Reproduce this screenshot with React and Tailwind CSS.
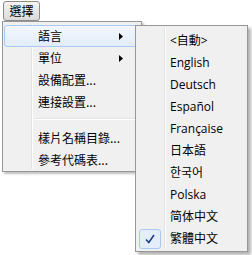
import { Fragment } from 'react';

const cjk = '"Noto Sans CJK TC", "Noto Sans CJK JP", sans-serif';
const latin = '"Segoe UI", "Open Sans", "Noto Sans CJK TC", sans-serif';

const mainItems = [
  { label: '語言', arrow: true, hover: true },
  { label: '單位', arrow: true },
  { label: '設備配置...' },
  { label: '連接設置...' },
  { sep: true },
  { label: '樣片名稱目錄...' },
  { label: '參考代碼表...' },
];

const languages = [
  '<自動>',
  'English',
  'Deutsch',
  'Español',
  'Française',
  '日本語',
  '한국어',
  'Polska',
  '简体中文',
  '繁體中文',
];

const Arrow = () => (
  <svg width="4" height="7" viewBox="0 0 4 7" className="absolute right-[15px] top-[7px]">
    <path d="M0 0 L4 3.5 L0 7 Z" fill="#000" />
  </svg>
);

const MainMenu = () => (
  <div className="absolute left-[2px] top-[21px] w-[140px] border border-[#979797] bg-[#f0f0f0] pt-[3px] pb-0 pl-[1px] pr-[2px] shadow-[2px_2px_2px_rgba(0,0,0,0.25)]">
    {/* gutter */}
    <div className="absolute left-[28px] top-[2px] bottom-[2px] w-[1px] bg-[#e2e3e3] shadow-[1px_0_0_#ffffff]" />
    {mainItems.map((it, i) =>
      it.sep ? (
        <div key={i} className="relative h-[9px] pl-[30px]">
          <div className="mt-[5px] h-[1px] bg-[#e2e3e3] shadow-[0_1px_0_#ffffff]" />
        </div>
      ) : (
        <div
          key={i}
          className={
            'relative flex h-[22px] items-center rounded-[3px] pl-[33px] text-[12px] text-black ' +
            (it.hover
              ? 'border border-[#a8caf2] bg-gradient-to-b from-[#f3f7fd] to-[#e2ecf9]'
              : 'border border-transparent')
          }
          style={{ fontFamily: cjk }}
        >
          {it.label}
          {it.arrow && <Arrow />}
        </div>
      )
    )}
  </div>
);

const SubMenu = () => (
  <div className="absolute left-[135px] top-[25px] w-[113px] border border-[#979797] bg-[#f0f0f0] pt-[4px] pb-[1px] pl-[2px] pr-[2px] shadow-[3px_3px_3px_rgba(0,0,0,0.3)]">
    <div className="absolute left-[28px] top-[2px] bottom-[2px] w-[1px] bg-[#e2e3e3] shadow-[1px_0_0_#ffffff]" />
    {languages.map((l, i) => (
      <div
        key={i}
        className="relative flex h-[22px] items-center pl-[32px] text-[12px] text-black"
        style={{ fontFamily: latin }}
      >
        {i === languages.length - 1 && (
          <div className="absolute left-[1px] top-[1px] flex h-[20px] w-[22px] items-center justify-center rounded-[3px] border border-[#a8caf2] bg-[#e4edfa]">
            <svg width="10" height="10" viewBox="0 0 10 10">
              <path d="M1 5.5 L3.8 8.5 L9 1" fill="none" stroke="#1d3f8f" strokeWidth="1.6" />
            </svg>
          </div>
        )}
        {l}
      </div>
    ))}
  </div>
);

export default function App() {
  return (
    <div className="relative h-[255px] w-[252px] overflow-hidden bg-white">
      <div className="ml-[3px] mt-[1px] flex h-[20px] w-[37px] items-center justify-center rounded-[3px] border border-[#8a8a8a] bg-gradient-to-b from-[#f4f4f4] to-[#dadada] text-[12px] text-black" style={{ fontFamily: cjk }}>
        選擇
      </div>
      <MainMenu />
      <SubMenu />
    </div>
  );
}
